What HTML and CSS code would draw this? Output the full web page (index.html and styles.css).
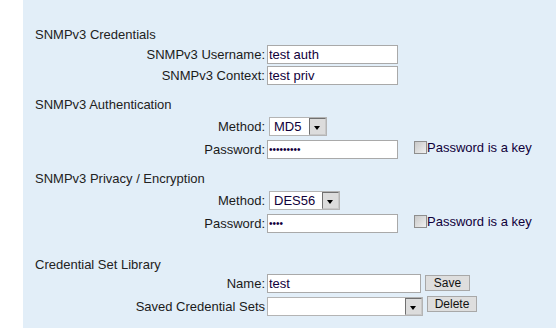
FILE: index.html
```html
<!DOCTYPE html>
<html lang="en">

<head>
  <meta charset="UTF-8">
  <meta name="viewport" content="width=device-width, initial-scale=1.0">
  <title>SNMPv3 Credentials</title>
  <link rel="stylesheet" href="styles.css">
</head>

<body>
  <form class="panel">
    <!-- credentials -->
    <div class="section">
      <h3 class="heading">SNMPv3 Credentials</h3>
      <div class="row tight">
        <label class="label" for="username">SNMPv3 Username:</label>
        <input class="text w-131" id="username" type="text" value="test auth">
      </div>
      <div class="row tight">
        <label class="label" for="context">SNMPv3 Context:</label>
        <input class="text w-131" id="context" type="text" value="test priv">
      </div>
    </div>

    <!-- authentication -->
    <div class="section sec-auth">
      <h3 class="heading">SNMPv3 Authentication</h3>
      <div class="row">
        <label class="label" for="authMethod">Method:</label>
        <span class="select w-58">
          <select id="authMethod">
            <option>MD5</option>
            <option>SHA</option>
          </select>
          <span class="arrow"></span>
        </span>
      </div>
      <div class="row">
        <label class="label" for="authPass">Password:</label>
        <input class="text pass w-131" id="authPass" type="password" value="authpass1">
        <label class="check"><input type="checkbox">Password is a key</label>
      </div>
    </div>

    <!-- privacy -->
    <div class="section sec-priv">
      <h3 class="heading">SNMPv3 Privacy / Encryption</h3>
      <div class="row">
        <label class="label" for="privMethod">Method:</label>
        <span class="select w-71">
          <select id="privMethod">
            <option>DES56</option>
            <option>AES128</option>
          </select>
          <span class="arrow"></span>
        </span>
      </div>
      <div class="row">
        <label class="label" for="privPass">Password:</label>
        <input class="text pass w-131" id="privPass" type="password" value="priv">
        <label class="check"><input type="checkbox">Password is a key</label>
      </div>
    </div>

    <!-- library -->
    <div class="section sec-lib">
      <h3 class="heading">Credential Set Library</h3>
      <div class="row">
        <label class="label" for="setName">Name:</label>
        <input class="text w-154" id="setName" type="text" value="test">
        <button class="btn save" type="button">Save</button>
      </div>
      <div class="row">
        <label class="label" for="savedSets">Saved Credential Sets</label>
        <span class="select w-156 flush">
          <select id="savedSets">
            <option></option>
          </select>
          <span class="arrow"></span>
        </span>
        <button class="btn delete" type="button">Delete</button>
      </div>
    </div>
  </form>
</body>

</html>
```

FILE: styles.css
```css
body {
  margin: 0;
  background: #fff;
  font-family: 'Liberation Sans', Arial, sans-serif;
  font-size: 13px;
  color: #1a1a1a;
}

.panel {
  margin: 0 0 0 23px;
  padding: 26px 0 0 12px;
  height: 100vh;
  box-sizing: border-box;
  background-color: #e2eef8;
}

.heading {
  margin: 0 0 1px;
  height: 18px;
  line-height: 18px;
  font-size: 13px;
  font-weight: normal;
  color: #222;
}

.sec-auth {
  margin-top: 10px;
}

.sec-priv {
  margin-top: 9px;
}

.sec-lib {
  margin-top: 21px;
}

.sec-lib .heading {
  margin-bottom: -2px;
}

.row {
  display: flex;
  align-items: center;
  height: 23px;
}

.row.tight {
  height: 21px;
}

.tight:first-of-type {
  margin-top: -1px;
}

.label {
  width: 230px;
  text-align: right;
  color: #1a1a1a;
}

.text {
  margin: 0 0 0 2px;
  height: 19px;
  padding: 0 1px;
  box-sizing: border-box;
  border: 1px solid #a9a9a9;
  background: #fff;
  font-family: 'Liberation Sans', Arial, sans-serif;
  font-size: 13px;
  color: #10003a;
  outline: none;
}

.pass {
  font-size: 10px;
  letter-spacing: 0;
}

.w-131 { width: 131px; }
.w-154 { width: 154px; }
.w-58 { width: 58px; }
.w-71 { width: 71px; }
.w-156 { width: 156px; }

.select {
  position: relative;
  display: inline-block;
  margin-left: 4px;
  height: 19px;
}

.select.flush {
  margin-left: 2px;
}

.select select {
  -webkit-appearance: none;
  appearance: none;
  width: 100%;
  height: 19px;
  margin: 0;
  padding: 0 0 0 4px;
  border: 1px solid #b4b4b4;
  border-radius: 0;
  background: #fff;
  font-family: 'Liberation Sans', Arial, sans-serif;
  font-size: 13px;
  color: #10003a;
  outline: none;
}

.arrow {
  position: absolute;
  top: 1px;
  right: 1px;
  width: 15px;
  height: 15px;
  border: 1px solid #707070;
  border-right-color: #c8c8c8;
  border-bottom-color: #c8c8c8;
  background: #dcdcdc;
  pointer-events: none;
}

.arrow::after {
  content: '';
  position: absolute;
  left: 4px;
  top: 7px;
  border-left: 3.5px solid transparent;
  border-right: 3.5px solid transparent;
  border-top: 4px solid #000;
}

.check {
  display: flex;
  align-items: center;
  margin-left: 16px;
  margin-top: -4px;
  color: #10003a;
}

.check input {
  -webkit-appearance: none;
  appearance: none;
  width: 13px;
  height: 13px;
  margin: 0;
  border: 1px solid #8e8e8e;
  background: linear-gradient(135deg, #c9c9c9, #f0f0f0);
}

.btn {
  height: 16px;
  margin: 0;
  padding: 0;
  border: 1px solid #a8a8a8;
  background: #dedede;
  font-family: 'Liberation Sans', Arial, sans-serif;
  font-size: 12px;
  line-height: 13px;
  color: #111;
}

.save {
  width: 45px;
  margin-left: 4px;
  align-self: flex-start;
  margin-top: 3px;
}

.delete {
  width: 50px;
  margin-left: 4px;
  align-self: flex-start;
  margin-top: 1px;
}
```
